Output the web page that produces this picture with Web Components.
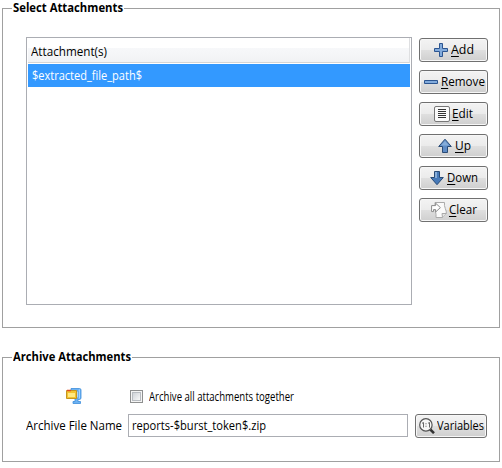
<!DOCTYPE html>
<html lang="en"><head><meta charset="utf-8"><title>Attachments</title>
<style>
body{margin:0;background:#fff;color:#000;font:12px/16px "Open Sans","Noto Sans",sans-serif}
</style></head><body>
<attachments-page></attachments-page>
<script>
const define=(name,html,setup)=>{
  const t=document.createElement('template');t.innerHTML=html;
  customElements.define(name,class extends HTMLElement{
    constructor(){super();this.attachShadow({mode:'open'}).append(t.content.cloneNode(true));}
    connectedCallback(){if(setup)setup(this,this.shadowRoot);}
  });
};
/* A single line of text condensed or expanded to fill the given width. */
define('ui-text',`<style>:host{display:inline-block;white-space:pre;flex:none;height:16px}span{display:inline-block;transform-origin:0 0}::slotted(u){text-decoration:underline;text-underline-offset:2px;text-decoration-thickness:1px;text-decoration-skip-ink:none}</style><span><slot></slot></span>`,(h,r)=>{
  const w=+h.getAttribute('width'),s=r.querySelector('span');
  h.style.width=w+'px';
  s.style.transform='scaleX('+w/s.getBoundingClientRect().width+')';
});
const icons={
add:`<path d="M6.5 1.5h3v5h5v3h-5v5h-3v-5h-5v-3h5z" fill="#82abdc" stroke="#2c5590"/>`,
remove:`<path d="M1.5 6.5h13v3h-13z" fill="#82abdc" stroke="#2c5590"/>`,
edit:`<rect x=".5" y=".5" width="15" height="15" rx="1.5" fill="#fafafa" stroke="#777"/><path d="M4 3.5h8M4 5.5h8M4 7.5h8M4 9.5h8M4 11.5h8" stroke="#333"/>`,
up:`<path d="M8 1.2L14.3 8.500H10.5v6h-5v-6H1.7z" fill="#5f8cc6" stroke="#294b76"/><path d="M8 3L12 7.500H4z" fill="#86add9"/>`,
down:`<path d="M5.5 1.5h5v6h3.8L8 14.7 1.7 7.500h3.8z" fill="#4679b8" stroke="#294b76"/><path d="M6 2h2v6H6z" fill="#86add9"/>`,
clear:`<path d="M4 .5h9.500q-.5 3 .8 6t1 5l-3.800 4H5q.3-3-.5-6T4 .5z" fill="#fafafa" stroke="#aaa"/><path d="M15.300 11.5h-4.300l.5 4" fill="#e4e4e4" stroke="#aaa"/><path d="M.6 3.600h4V1.200L9.400 5.600l-4.800 4.400V7.600H2.500v2H.6z" fill="#fff" stroke="#8c8c8c"/>`,
zoom:`<path d="M10.8 11l4.2 4.2" stroke="#333" stroke-width="2.5"/><circle cx="6.9" cy="6.9" r="6.2" fill="#f7f7f7" stroke="#555" stroke-width="1.2"/><path d="M3 5.300l1.500-.8v5M9 5.300l1.500-.8v5" fill="none" stroke="#666"/><path d="M6.500 5.200h1v1h-1zM6.500 7.800h1v1h-1z" fill="#555"/>`,
zip:`<path d="M5 .5h8.5q1.500 0 1.500 1.5v8q0 1.500-2 1.500h-1v2h2.500v2H7v-2h2V10h3V3H5z" fill="#6db2f2" stroke="#3c8edb" stroke-width=".8"/><path d="M13.300 1.500v9" stroke="#b5dcff"/><path d="M.5 2.500h10v8H.5z" fill="#f3c330" stroke="#c4951f"/><path d="M2 5h7v4H2z" fill="#ffe982"/><path d="M1 2.500h4" stroke="#df4923" stroke-width="1.500"/>`};
define('ui-icon',`<style>:host{display:block;width:16px;height:16px;flex:none}svg{display:block}</style><svg width="16" height="16" viewBox="0 0 16 16"></svg>`,(h,r)=>{r.querySelector('svg').innerHTML=icons[h.getAttribute('name')]});
define('ui-button',`<style>:host{display:block;height:24px}button{box-sizing:border-box;display:flex;align-items:center;justify-content:center;gap:2px;width:100%;height:24px;margin:0;padding:0;border:1px solid #707070;border-radius:3px;background:linear-gradient(#f3f3f3,#ebebeb 49%,#dfdfdf 51%,#cfcfcf);box-shadow:inset 0 0 0 1px #f7f7f7;font:inherit;color:#000}</style><button><slot></slot></button>`);
define('ui-group',`<style>:host{display:block;box-sizing:border-box;border:1px solid #a0a0a0}.legend{display:flex;height:16px;width:max-content;margin:-9px 0 0 9px;padding:0 1px;background:#fff;font-weight:700}</style><div class="legend"><slot name="legend"></slot></div><slot></slot>`);
define('ui-table',`<style>:host{display:block;box-sizing:border-box;width:386px;height:268px;border:1px solid #abadb3;padding:0 1px}.head{box-sizing:border-box;height:25px;padding:6px 3px 0;border-bottom:1px solid #d5d5d5;background:linear-gradient(#fff 40%,#f7f8fa 41%,#f1f2f4);border-right:1px solid #dedfe1}.row{height:23px;margin-top:1px;padding:4px 4px 0;box-sizing:border-box;background:#3399ff;color:#fff}</style><div class="head"><slot name="head"></slot></div><div class="row"><slot></slot></div>`);
define('ui-checkbox',`<style>:host{display:block;box-sizing:border-box;width:13px;height:13px;border:1px solid #8e8f8f;padding:1px;background:#f4f4f4;flex:none}i{display:block;box-sizing:border-box;width:9px;height:9px;border:1px solid #b8bcc1;background:linear-gradient(135deg,#cfd3d8,#f8f8f8)}</style><i></i>`);
define('ui-input',`<style>:host{display:block;box-sizing:border-box;width:280px;height:23px;border:1px solid #abadb3;padding:3px;background:#fff}</style><slot></slot>`);
define('attachments-page',`<style>
:host{display:flex;flex-direction:column;gap:29px;box-sizing:border-box;width:502px;height:468px;padding:8px 2px 0}
ui-group{width:498px}.select{height:320px}.archive{height:105px}
.body{display:flex;gap:7px;padding:21px 0 0 23px}
.buttons{display:flex;flex-direction:column;gap:8px;width:69px;padding-top:1px}
.grid{display:grid;grid-template-columns:96px 280px 73px;column-gap:6px;row-gap:8px;padding:23px 0 0 23px;grid-template-rows:18px 24px}
.check{display:flex;gap:6px;padding:2px 0 0 2px}.check ui-text{margin-top:-1px}
.zip{margin-left:40px}.name{margin-top:4px}.vars{margin-left:1px}
</style>
<ui-group class="select"><ui-text slot="legend" width="110">Select Attachments</ui-text>
<div class="body"><ui-table><ui-text slot="head" width="76">Attachment(s)</ui-text><ui-text width="110">$extracted_file_path$</ui-text></ui-table>
<div class="buttons">
<ui-button><ui-icon name="add"></ui-icon><ui-text width="23"><u>A</u>dd</ui-text></ui-button>
<ui-button><ui-icon name="remove"></ui-icon><ui-text width="44"><u>R</u>emove</ui-text></ui-button>
<ui-button><ui-icon name="edit"></ui-icon><ui-text width="21"><u>E</u>dit</ui-text></ui-button>
<ui-button><ui-icon name="up"></ui-icon><ui-text width="16"><u>U</u>p</ui-text></ui-button>
<ui-button><ui-icon name="down"></ui-icon><ui-text width="31"><u>D</u>own</ui-text></ui-button>
<ui-button><ui-icon name="clear"></ui-icon><ui-text width="28"><u>C</u>lear</ui-text></ui-button>
</div></div></ui-group>
<ui-group class="archive"><ui-text slot="legend" width="118">Archive Attachments</ui-text>
<div class="grid"><ui-icon class="zip" name="zip"></ui-icon><div class="check"><ui-checkbox></ui-checkbox><ui-text width="145">Archive all attachments together</ui-text></div><span></span>
<ui-text class="name" width="96">Archive File Name</ui-text><ui-input><ui-text width="134">reports-$burst_token$.zip</ui-text></ui-input>
<ui-button class="vars"><ui-icon name="zoom"></ui-icon><ui-text width="47">Variables</ui-text></ui-button></div></ui-group>`);
</script></body></html>
